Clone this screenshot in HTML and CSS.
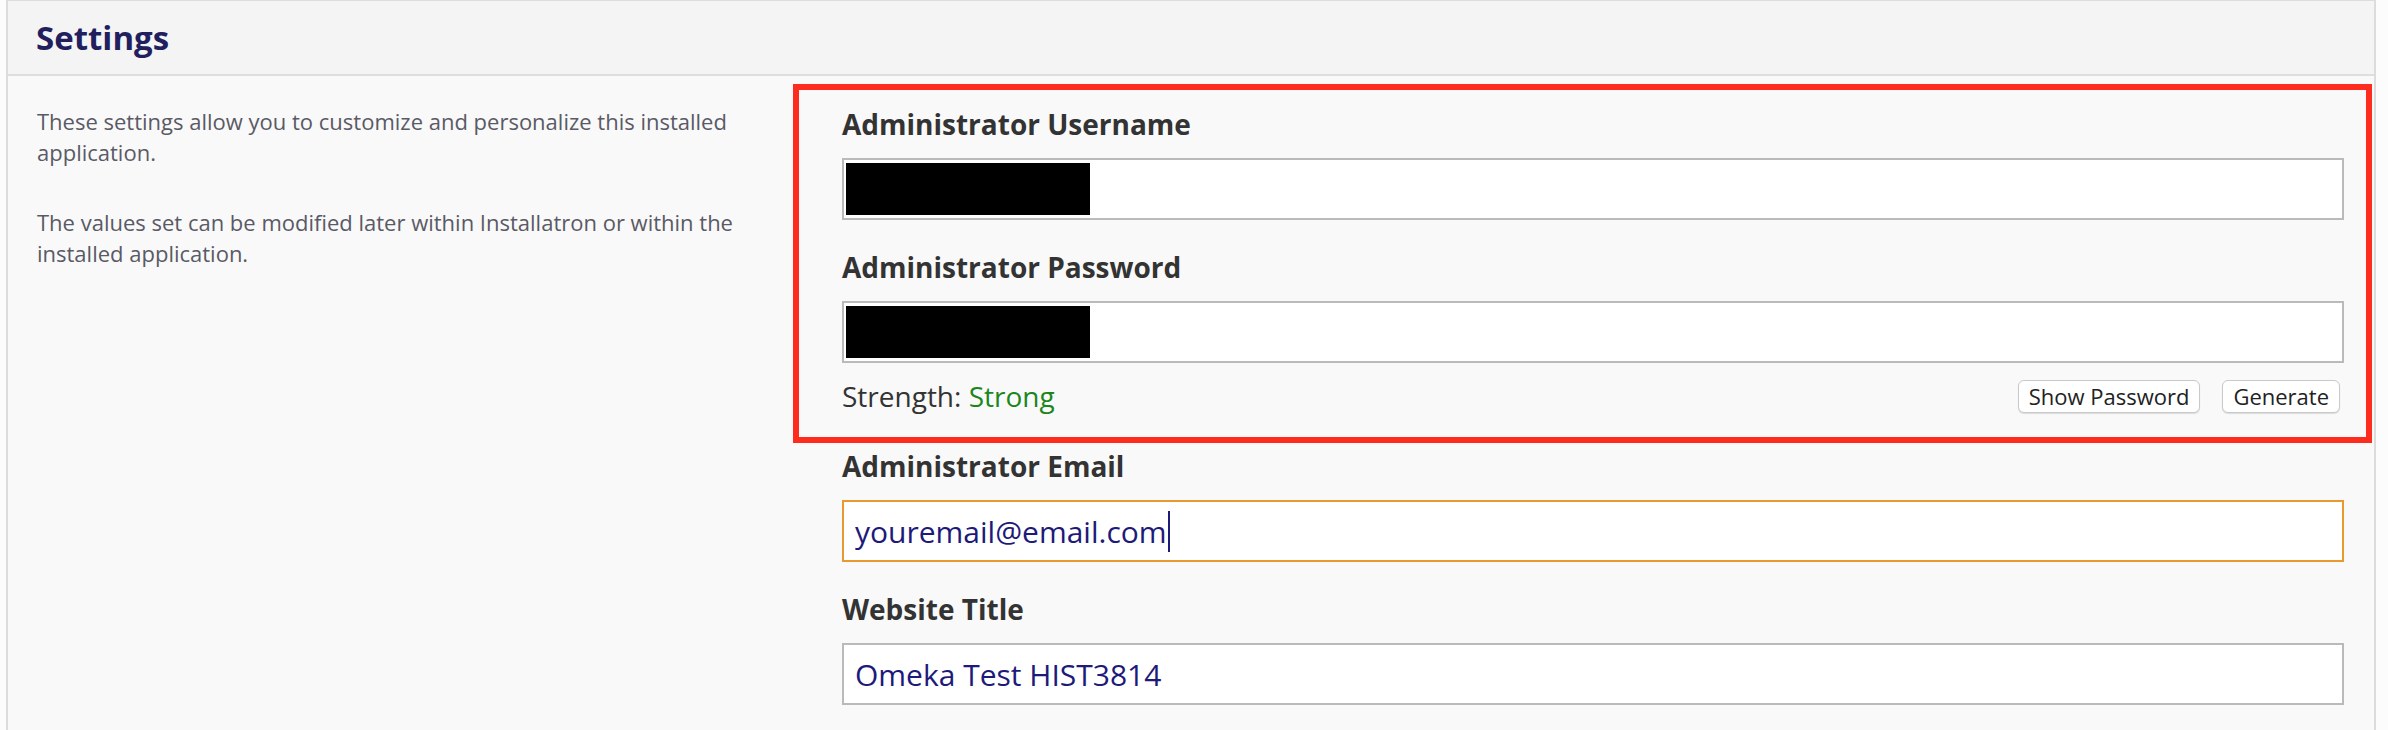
FILE: index.html
```html
<!DOCTYPE html>
<html lang="en">
<head>
<meta charset="utf-8">
<title>Settings</title>
<link rel="stylesheet" href="styles.css">
</head>
<body>
<div class="panel">
  <div class="panel-header">
    <h2 class="panel-title">Settings</h2>
  </div>
  <div class="panel-body">
    <div class="intro">
      <p>These settings allow you to customize and personalize this installed application.</p>
      <p>The values set can be modified later within Installatron or within the installed application.</p>
    </div>
    <div class="form">
      <div class="highlight">
        <div class="field">
          <label class="field-label">Administrator Username</label>
          <div class="input"><span class="redacted"></span></div>
        </div>
        <div class="field">
          <label class="field-label">Administrator Password</label>
          <div class="input"><span class="redacted"></span></div>
        </div>
        <div class="strength-row">
          <div class="strength">Strength: <span class="strong">Strong</span></div>
          <div class="actions">
            <button class="btn">Show Password</button>
            <button class="btn">Generate</button>
          </div>
        </div>
      </div>
      <div class="plain">
        <div class="field">
          <label class="field-label">Administrator Email</label>
          <div class="input focused"><span class="value">youremail@email.com</span><span class="caret"></span></div>
        </div>
        <div class="field">
          <label class="field-label">Website Title</label>
          <div class="input"><span class="value">Omeka Test HIST3814</span></div>
        </div>
      </div>
    </div>
  </div>
</div>
</body>
</html>
```

FILE: styles.css
```css
* { box-sizing: border-box; }

html, body {
  margin: 0;
  padding: 0;
  background: #fcfcfc;
  font-family: "Open Sans", "Liberation Sans", sans-serif;
  height: 730px;
  overflow: hidden;
}

.panel {
  margin-left: 6px;
  width: 2370px;
  border-top: 1px solid #dcdcdc;
  border-left: 2px solid #dcdcdc;
  border-right: 2px solid #dcdcdc;
  background: #f9f9f9;
  height: 730px;
}

.panel-header {
  height: 75px;
  background: #f4f4f4;
  border-bottom: 2px solid #dedede;
  padding-left: 28px;
}

.panel-title {
  margin: 0;
  font-size: 33px;
  font-weight: 700;
  line-height: 74px;
  color: #221f5f;
}

.panel-body {
  display: flex;
}

.intro {
  width: 785px;
  padding: 30px 40px 0 29px;
  color: #5a5a66;
  font-size: 22px;
  line-height: 31px;
}

.intro p {
  margin: 0 0 39px;
}

.form {
  flex: 1;
  padding-top: 8px;
}

.highlight {
  border: 6px solid #fe2b1f;
  margin-right: 2px;
  padding: 15px 22px 24px 43px;
}

.plain {
  padding: 4px 30px 0 49px;
}

.field {
  margin-bottom: 28px;
}

.field-label {
  display: block;
  font-size: 28px;
  font-weight: 700;
  line-height: 38px;
  color: #333;
  margin-bottom: 15px;
}

.input {
  height: 62px;
  background: #fff;
  border: 2px solid #bababa;
  display: flex;
  align-items: center;
  padding: 0 11px;
  font-size: 30px;
  color: #1d1a79;
}

.input.focused {
  border-color: #e89a2e;
}

.redacted {
  display: block;
  width: 244px;
  height: 52px;
  background: #000;
  margin-left: -9px;
}

.caret {
  display: inline-block;
  width: 2px;
  height: 41px;
  background: #1d1a79;
  margin-left: 1px;
}

.strength-row {
  display: flex;
  align-items: center;
  justify-content: space-between;
  height: 33px;
  margin-top: -11px;
}

.strength {
  font-size: 28px;
  line-height: 33px;
  color: #333;
}

.strong {
  color: #1c861c;
}

.actions {
  display: flex;
  gap: 22px;
  margin-right: 4px;
}

.btn {
  height: 33px;
  padding: 0 10px;
  font-family: "Open Sans", "Liberation Sans", sans-serif;
  font-size: 22px;
  line-height: 31px;
  color: #222;
  background: #fff;
  border: 1px solid #c9c9c9;
  border-radius: 6px;
  box-shadow: 0 1px 1px rgba(0, 0, 0, 0.12);
}
```
